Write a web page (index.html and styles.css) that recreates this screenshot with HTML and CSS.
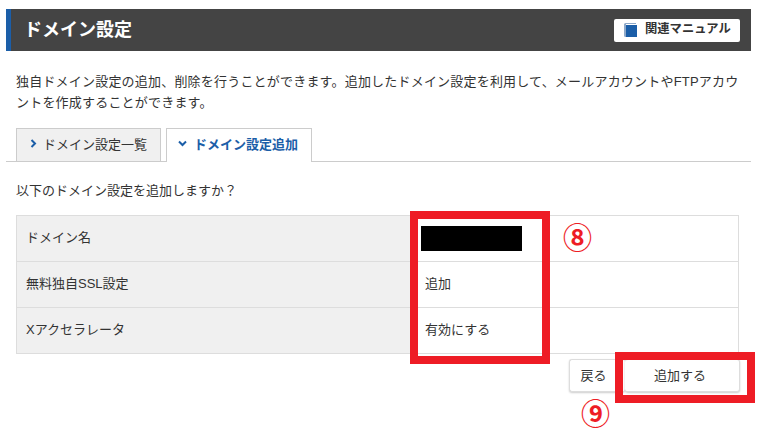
FILE: index.html
```html
<!DOCTYPE html>
<html lang="ja">

<head>
    <meta charset="UTF-8">
    <title>ドメイン設定</title>
    <link rel="stylesheet" href="styles.css">
</head>

<body>
    <div class="wrapper">
        <div class="page-head">
            <h1 class="page-title">ドメイン設定</h1>
            <a class="manual-btn">
                <svg class="manual-icon" width="13" height="14" viewBox="0 0 13 14">
                    <path d="M0 1.5 Q0 0 1.5 0 H12 V1 H2 V14 H1.5 Q0 14 0 12.5 Z" fill="#8fa9c9" />
                    <rect x="2" y="2" width="11" height="12" fill="#1b5ea8" />
                </svg>
                <span class="manual-label">関連マニュアル</span>
            </a>
        </div>

        <p class="lead">独自ドメイン設定の追加、削除を行うことができます。追加したドメイン設定を利用して、メールアカウントやFTPアカウントを作成することができます。</p>

        <div class="tabs">
            <div class="tab">
                <svg class="tab-arrow" width="7" height="9" viewBox="0 0 7 9">
                    <path d="M1.5 1 L5 4.5 L1.5 8" fill="none" stroke="#1b5ea8" stroke-width="2" />
                </svg>
                ドメイン設定一覧
            </div>
            <div class="tab tab-active">
                <svg class="tab-arrow" width="9" height="7" viewBox="0 0 9 7">
                    <path d="M1 1.5 L4.5 5 L8 1.5" fill="none" stroke="#1b5ea8" stroke-width="2" />
                </svg>
                ドメイン設定追加
            </div>
        </div>

        <p class="confirm">以下のドメイン設定を追加しますか？</p>

        <table class="detail">
            <tr>
                <th>ドメイン名</th>
                <td><span class="masked"></span></td>
            </tr>
            <tr>
                <th>無料独自SSL設定</th>
                <td>追加</td>
            </tr>
            <tr>
                <th>Xアクセラレータ</th>
                <td>有効にする</td>
            </tr>
        </table>

        <div class="actions">
            <button class="btn btn-back">戻る</button>
            <button class="btn btn-add">追加する</button>
        </div>
    </div>

    <div class="mark mark-values"></div>
    <div class="mark mark-button"></div>
    <span class="step step-8">⑧</span>
    <span class="step step-9">⑨</span>
</body>

</html>
```

FILE: styles.css
```css
* {
    padding: 0;
    margin: 0;
    box-sizing: border-box;
}

body {
    position: relative;
    height: 447px;
    overflow: hidden;
    background: #ffffff;
    color: #333333;
    font-family: "Liberation Sans", "Noto Sans CJK JP", sans-serif;
    font-size: 13px;
}

.wrapper {
    width: 745px;
    margin-left: 6px;
    padding-top: 9px;
}

.page-head {
    height: 42px;
    display: flex;
    align-items: center;
    justify-content: space-between;
    padding: 0 11px 0 13px;
    background: #444444;
    border-left: 5px solid #1b5ea8;
}

.page-title {
    padding-bottom: 4px;
    color: #ffffff;
    font-size: 18px;
    font-weight: bold;
}

.manual-btn {
    width: 126px;
    height: 23px;
    display: flex;
    align-items: center;
    gap: 8px;
    padding-left: 10px;
    background: #ffffff;
    border-radius: 2px;
    color: #333333;
    font-size: 12.3px;
    font-weight: bold;
}

.manual-label {
    padding-bottom: 4px;
}

.lead {
    padding: 20px 10px 0;
    line-height: 21px;
    letter-spacing: 0.2px;
}

.tabs {
    height: 34px;
    display: flex;
    gap: 5px;
    margin-top: 15px;
    padding-left: 10px;
    border-bottom: 1px solid #cccccc;
}

.tab {
    width: 145px;
    height: 33px;
    display: flex;
    align-items: center;
    gap: 6px;
    padding: 0 0 4px 13px;
    background: #f0f0f0;
    border: 1px solid #cccccc;
    border-bottom: none;
}

.tab-active {
    width: 146px;
    height: 34px;
    padding-left: 11px;
    gap: 7px;
    background: #ffffff;
    color: #1b5ea8;
    font-weight: bold;
}

.confirm {
    padding: 20px 10px 0;
    line-height: 18px;
}

.detail {
    width: 723px;
    margin: 15px 0 0 10px;
    border-collapse: collapse;
    table-layout: fixed;
}

.detail th,
.detail td {
    height: 46px;
    padding: 0 10px 4px;
    border: 1px solid #dddddd;
    font-weight: normal;
    text-align: left;
}

.detail th {
    width: 398px;
    padding-left: 9px;
    background: #f0f0f0;
}

.masked {
    display: block;
    width: 101px;
    height: 25px;
    margin: 4px 0 0 -4px;
    background: #000000;
}

.actions {
    display: flex;
    justify-content: flex-end;
    margin: 5px 11px 0 0;
}

.btn {
    height: 33px;
    padding-bottom: 2px;
    background: #ffffff;
    border: 1px solid #dddddd;
    border-radius: 3px;
    box-shadow: 0 1px 2px rgba(0, 0, 0, 0.2);
    color: #333333;
    font-family: inherit;
    font-size: 13px;
}

.btn-back {
    width: 56px;
    padding-right: 8px;
    border-right: none;
}

.btn-add {
    width: 115px;
    padding-right: 4px;
    border-left: none;
}

.mark {
    position: absolute;
    border: 8px solid #ee1c25;
}

.mark-values {
    left: 410px;
    top: 211px;
    width: 140px;
    height: 153px;
}

.mark-button {
    left: 615px;
    top: 352px;
    width: 140px;
    height: 51px;
}

.step {
    position: absolute;
    color: #ee1c25;
    font-family: "Noto Sans CJK JP", sans-serif;
    font-size: 29px;
    font-weight: bold;
    line-height: 30px;
}

.step-8 {
    left: 563px;
    top: 221px;
}

.step-9 {
    left: 581px;
    top: 397px;
}
```
